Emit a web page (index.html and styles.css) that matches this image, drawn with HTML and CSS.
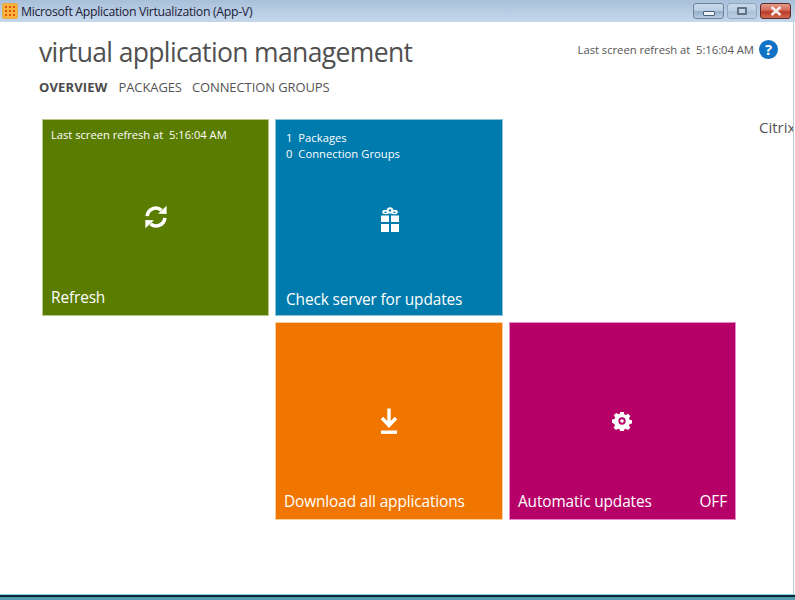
FILE: index.html
```html
<!DOCTYPE html>
<html lang="en">
<head>
<meta charset="utf-8">
<title>Microsoft Application Virtualization (App-V)</title>
<link rel="stylesheet" href="styles.css">
</head>
<body>
<div class="window">
  <header class="titlebar">
    <svg class="app-icon" width="16" height="16" viewBox="0 0 16 16">
      <rect x="0.5" y="0.5" width="15" height="15" rx="1" fill="#f8b33a" stroke="#e7a94e"/>
      <path d="M3 3h2v2H3zM7 3h2v2H7zM11 3h2v2h-2zM3 7h2v2H3zM7 7h2v2H7zM11 7h2v2h-2zM3 11h2v2H3zM7 11h2v2H7zM11 11h2v2h-2z" fill="#e0500a"/>
    </svg>
    <span class="window-title">Microsoft Application Virtualization (App-V)</span>
    <div class="controls">
      <div class="ctl"><span class="glyph-min"></span></div>
      <div class="ctl ctl-max"><span class="glyph-max"></span></div>
      <div class="ctl ctl-close">
        <svg width="14" height="10" viewBox="0 0 14 10"><path d="M2.5 1 L11.5 9 M11.5 1 L2.5 9" stroke="#f4ece8" stroke-width="2.6"/></svg>
      </div>
    </div>
  </header>
  <main class="content">
    <div class="head">
      <h1 class="page-title">virtual application management</h1>
      <div class="status">
        <span>Last screen refresh at&nbsp; 5:16:04 AM</span>
        <span class="help">?</span>
      </div>
    </div>
    <nav class="tabs">
      <span class="tab tab-active">OVERVIEW</span>
      <span class="tab">PACKAGES</span>
      <span class="tab">CONNECTION GROUPS</span>
    </nav>
    <section class="tiles">
      <article class="tile green">
        <div class="tile-info"><div>Last screen refresh at&nbsp; 5:16:04 AM</div></div>
        <svg class="tile-icon" width="26" height="26" viewBox="0 0 26 26">
          <path d="M4.2 12.2 A8.6 8.6 0 0 1 18.4 6.2" fill="none" stroke="#fff" stroke-width="3.6"/>
          <path d="M15 9.8 L23.6 10 L23.6 1.8 Z" fill="#fff"/>
          <path d="M21.8 13.8 A8.6 8.6 0 0 1 7.6 19.8" fill="none" stroke="#fff" stroke-width="3.6"/>
          <path d="M11 16.2 L2.4 16 L2.4 24.2 Z" fill="#fff"/>
        </svg>
        <div class="tile-label">Refresh</div>
      </article>
      <article class="tile blue">
        <div class="tile-info tile-info-pad">
          <div>1&nbsp; Packages</div>
          <div>0&nbsp; Connection Groups</div>
        </div>
        <svg class="tile-icon icon-gift" width="20" height="26" viewBox="0 0 20 26">
          <ellipse cx="5.6" cy="5" rx="3.4" ry="2.2" fill="#fff"/>
          <ellipse cx="14.4" cy="5" rx="3.4" ry="2.2" fill="#fff"/>
          <circle cx="10" cy="3.4" r="3.2" fill="#fff"/>
          <circle cx="10" cy="3.4" r="1.2" fill="#007bad"/>
          <ellipse cx="5.6" cy="5.2" rx="1.3" ry="0.8" fill="#007bad"/>
          <ellipse cx="14.4" cy="5.2" rx="1.3" ry="0.8" fill="#007bad"/>
          <rect x="1" y="8.5" width="8" height="6.5" fill="#fff"/>
          <rect x="11" y="8.5" width="8" height="6.5" fill="#fff"/>
          <rect x="1" y="17" width="8" height="8" fill="#fff"/>
          <rect x="11" y="17" width="8" height="8" fill="#fff"/>
        </svg>
        <div class="tile-label label-blue">Check server for updates</div>
      </article>
      <div class="side-note">Citrix</div>
      <article class="tile orange tile-c2">
        <svg class="tile-icon icon-down" width="18" height="27" viewBox="0 0 18 27">
          <path d="M9 1 V17" stroke="#fff" stroke-width="3.4" fill="none"/>
          <path d="M2 10.5 L9 18 L16 10.5" stroke="#fff" stroke-width="3.4" fill="none"/>
          <rect x="1" y="23" width="16" height="3.4" fill="#fff"/>
        </svg>
        <div class="tile-label label-tight">Download all applications</div>
      </article>
      <article class="tile magenta tile-c3">
        <svg class="tile-icon icon-gear" width="20" height="20" viewBox="0 0 22 22">
          <path fill="#fff" fill-rule="evenodd" d="M9 1h4l.6 2.8 1.6.7 2.4-1.5 2.6 2.6-1.5 2.4.7 1.6 2.8.6v3.6l-2.8.6-.7 1.6 1.5 2.4-2.6 2.6-2.4-1.5-1.6.7-.6 2.8H9l-.6-2.8-1.6-.7-2.4 1.5-2.6-2.6 1.5-2.4-.7-1.6L0 13v-3.6l2.8-.6.7-1.6L2 4.8l2.6-2.6L7 3.7l1.6-.7zM11 7a4 4 0 1 0 0 8 4 4 0 0 0 0-8z"/>
          <circle cx="11" cy="11" r="2" fill="#fff"/>
        </svg>
        <div class="tile-label label-tight label-row"><span>Automatic updates</span><span>OFF</span></div>
      </article>
    </section>
  </main>
  <footer class="taskstrip"></footer>
</div>
</body>
</html>
```
FILE: styles.css
```css
* { box-sizing: border-box; }
html, body { margin: 0; height: 100%; overflow: hidden; background: #fff; }
body { font-family: "Open Sans", "Noto Sans", sans-serif; color: #555; }
.window { width: 795px; height: 600px; display: flex; flex-direction: column; overflow: hidden; }
.titlebar {
  height: 22px; flex: none; display: flex; align-items: center; padding: 0 1px 0 2px;
  background: linear-gradient(180deg, #a9c0da 0%, #b8cde4 50%, #c4d7ea 100%);
}
.app-icon { flex: none; margin-right: 3px; }
.window-title { font: 12.3px "Open Sans", sans-serif; letter-spacing: -0.31px; color: #1c1c38; }
.controls { margin-left: auto; display: flex; gap: 3px; align-self: flex-start; margin-top: 3px; margin-right: 3px; }
.ctl {
  width: 31px; height: 16px; border: 1px solid #6e8298; border-radius: 3px;
  background: linear-gradient(180deg, #c8d9ea 0%, #bcd0e4 45%, #93aec8 55%, #b7cde2 100%);
  display: flex; align-items: center; justify-content: center;
}
.ctl-max { width: 30px; border-color: #90a6be; background: linear-gradient(180deg, #c6d7e8 0%, #bdd0e3 45%, #a9c1d8 55%, #bcd0e4 100%); }
.ctl-close { width: 31px; border-color: #5c2a28; background: linear-gradient(180deg, #e39a8a 0%, #d36a58 45%, #b93a26 55%, #d06a50 100%); }
.glyph-min { width: 12px; height: 5px; margin-top: 5px; background: #eef3f8; border: 1px solid #4c5f74; border-radius: 1px; }
.glyph-max { width: 10px; height: 8px; border: 2px solid #5f7287; border-radius: 1px; background: #c5d6e6; }
.content { flex: 1; min-height: 0; width: 794px; overflow: hidden; padding: 0 0 0 39px; border-right: 1px solid #b9cde0; }
.head { display: flex; justify-content: space-between; align-items: flex-start; height: 55px; padding-top: 12px; }
.page-title { margin: 0; font-size: 26.5px; line-height: 36px; font-weight: 400; letter-spacing: -0.64px; color: #505050; }
.status { display: flex; align-items: center; gap: 5px; font-size: 11.3px; letter-spacing: -0.05px; color: #555; margin-top: 2px; padding-right: 15px; height: 26px; }
.help {
  width: 19px; height: 19px; border-radius: 50%; background: #0f72c4; color: #fff; flex: none;
  font: 700 15px/19px "Open Sans", sans-serif; text-align: center; letter-spacing: 0;
}
.tabs { display: flex; gap: 10px; height: 42px; font-size: 13px; line-height: 20px; letter-spacing: -0.1px; color: #555; }
.tab-active { font-weight: 700; letter-spacing: 0.15px; color: #4a4a4a; margin-right: 1px; }
.tiles { display: grid; grid-template-columns: 227px 228px 227px 70px; grid-template-rows: 197px 198px; column-gap: 6px; row-gap: 6px; margin-left: 3px; }
.tile {
  position: relative; display: flex; flex-direction: column; align-items: flex-start; color: #fff;
  border-style: solid; border-width: 1px;
}
.green { background: #5a7c00; border-color: #b5c98a; }
.blue { background: #007bad; border-color: #8ec4da; }
.orange { background: #f07600; border-color: #fad09c; }
.magenta { background: #b60068; border-color: #e58cc6; }
.tile-c2 { grid-column: 2; grid-row: 2; }
.tile-c3 { grid-column: 3; grid-row: 2; }
.tile-info { padding: 7px 0 0 8px; font-size: 11.2px; line-height: 16px; letter-spacing: -0.02px; }
.tile-info-pad { padding: 10px 0 0 10px; letter-spacing: 0.04px; }
.tile-icon { position: absolute; left: 50%; top: 50%; transform: translate(-50%, -50%); margin-top: -1px; }
.icon-gift { margin-top: 2px; margin-left: 1px; }
.icon-down { margin-top: 0; margin-left: 0; }
.icon-gear { margin-top: 0; margin-left: -1px; }
.tile-label { margin-top: auto; padding: 0 8px 6px 8px; font-size: 15.4px; line-height: 22px; letter-spacing: -0.12px; white-space: nowrap; }
.label-blue { padding: 0 10px 4px 10px; }
.label-tight { width: 100%; }
.label-row { display: flex; justify-content: space-between; }
.side-note { grid-column: 4; grid-row: 1; font-size: 15px; line-height: 16px; padding: 0 0 0 17px; white-space: nowrap; color: #555; }
.taskstrip {
  flex: none; height: 6px;
  border-top: 1px solid #7fcfe6;
  background: linear-gradient(180deg, #0d2a34 0, #0d2a34 2px, #2c7e98 2px, #5fa3b4 60%, #4a98b0 100%);
}
```
